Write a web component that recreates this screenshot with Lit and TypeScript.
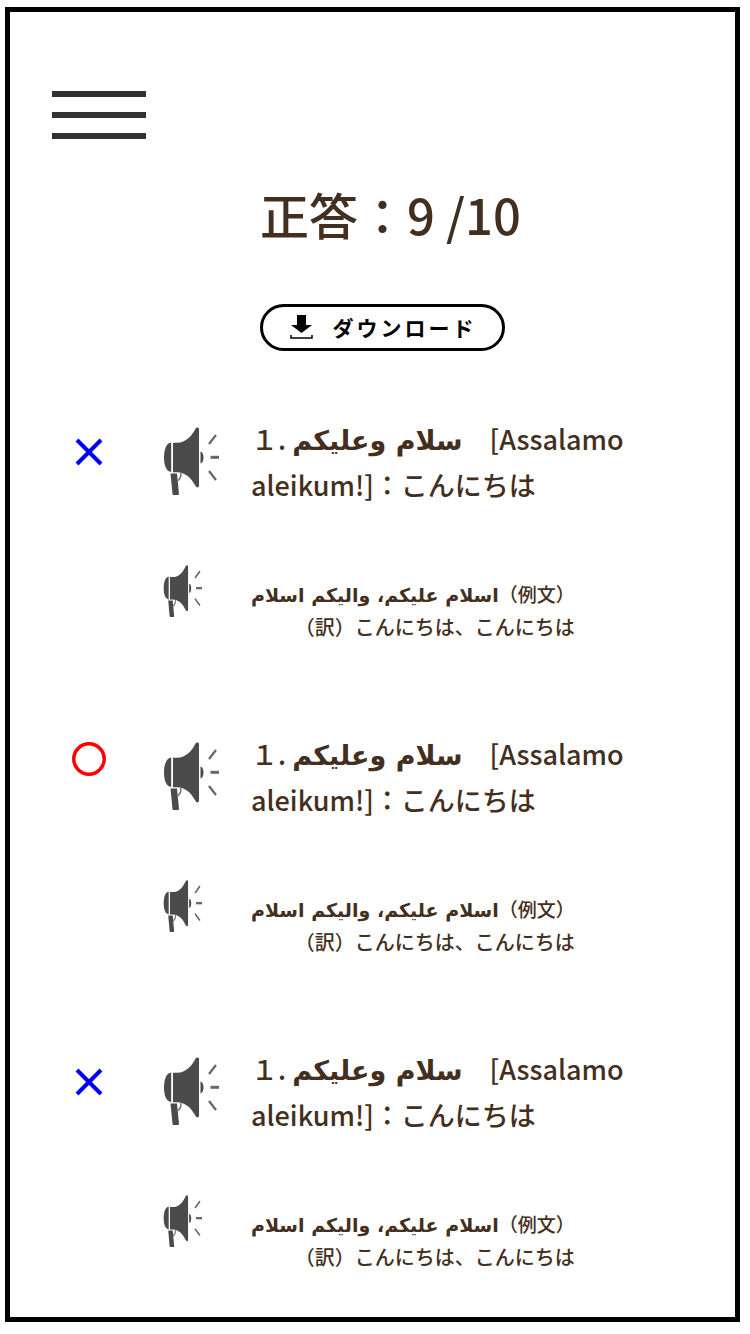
import { LitElement, html, css, svg } from "lit";
import { customElement, property, state } from "lit/decorators.js";

interface Phrase {
  correct: boolean;
  arabic: string;
  reading: string;
  meaning: string;
  example: string;
  translation: string;
}

const phrase = (correct: boolean): Phrase => ({
  correct,
  arabic: "سلام وعليكم",
  reading: "[Assalamo aleikum!]",
  meaning: "こんにちは",
  example: "اسلام عليكم، واليكم اسلام",
  translation: "こんにちは、こんにちは",
});

@customElement("speak-button")
class SpeakButton extends LitElement {
  @property() label = "";

  static styles = css`
    :host {
      display: block;
    }
    .button {
      display: block;
      width: 100%;
      height: 100%;
      padding: 0;
      border: 0;
      background: none;
      cursor: pointer;
    }
    .icon {
      display: block;
      width: 100%;
      height: 100%;
    }
  `;

  render() {
    return html`<button class="button" type="button" aria-label=${this.label}>
      <svg class="icon" viewBox="0 0 56 68" preserveAspectRatio="none" fill="#4b4b4b" aria-hidden="true">
        <path d="M8.200 15.500C3.500 16 1 22 1 30.500S3.500 44.500 8.200 45Z" />
        <path d="M10 15.800H14C23 15.500 29 9 32.500 1.500C33.500 0 36 0 36 2V58.500C36 61 33.500 61 32.500 59C28 50 22 45.500 14 45.200H10Z" />
        <path d="M37.500 24.500C41.500 25 41.500 36 37.500 36.500Z" />
        <path d="M7.500 46.500H14L16 67Q16 68 15 68H10.500Q9.500 68 9.500 67Z" />
        <path d="M17.800 46Q18.500 51 14.500 54" fill="none" stroke="#777" stroke-width="1.500" />
        <path d="M46 17L53 8M46 44L53 53" fill="none" stroke="#666" stroke-width="2.200" />
        <path d="M47.500 30.300H56" fill="none" stroke="#666" stroke-width="3" />
      </svg>
    </button>`;
  }
}

@customElement("phrase-result")
class PhraseResult extends LitElement {
  @property({ attribute: false }) phrase!: Phrase;

  static styles = css`
    :host {
      display: grid;
      grid-template-columns: 34px 56px minmax(0, 376px);
      column-gap: 57px;
      row-gap: 57px;
      align-items: start;
    }
    .mark {
      display: block;
      width: 34px;
      height: 54px;
    }
    .large {
      width: 56px;
      height: 68px;
      margin-top: 11px;
    }
    .small {
      grid-column: 2;
      width: 39px;
      height: 52px;
    }
    .word,
    .example {
      margin: 0 0 0 -25px;
    }
    .word {
      font-size: 27px;
      line-height: 46px;
    }
    .example {
      justify-self: start;
      margin-top: 12px;
      text-align: right;
    }
    .line {
      display: block;
      font-size: 19px;
      line-height: 33px;
    }
    .translation {
      font-size: 20px;
    }
    .arabic {
      font-family: "DejaVu Sans", sans-serif;
      font-weight: bold;
      line-height: 1;
    }
  `;

  render() {
    const p = this.phrase;
    return html`
      <svg class="mark" viewBox="0 0 34 54" fill="none" stroke-width="4" role="img" aria-label=${p.correct ? "正解" : "不正解"}>
        ${p.correct
          ? svg`<circle cx="17" cy="28" r="15.200" stroke="#f00" stroke-width="3.500" />`
          : svg`<path d="M5 24L29 48M29 24L5 48" stroke="#00f" />`}
      </svg>
      <speak-button class="large" label="単語を再生"></speak-button>
      <p class="word">１. <bdi class="arabic" lang="ar">${p.arabic}</bdi>${`　${p.reading}：${p.meaning}`}</p>
      <speak-button class="small" label="例文を再生"></speak-button>
      <p class="example">
        <span class="line"><bdi class="arabic" lang="ar">${p.example}</bdi>（例文）</span>
        <span class="line translation">${`（訳）${p.translation}`}</span>
      </p>
    `;
  }
}

@customElement("app-root")
class AppRoot extends LitElement {
  @state() private phrases = [phrase(false), phrase(true), phrase(false)];

  static styles = css`
    :host {
      display: block;
      box-sizing: border-box;
      padding: 7px 10px 12px 5px;
      background: #fff;
      color: #432f20;
      font-family: "Noto Sans CJK JP", sans-serif;
      font-weight: 500;
    }
    .frame {
      border: 5px solid #000;
      padding: 79px 42px 44px;
    }
    .menu {
      display: flex;
      flex-direction: column;
      gap: 15px;
      width: 94px;
      padding: 0;
      border: 0;
      background: none;
      cursor: pointer;
    }
    .bar {
      height: 6px;
      background: #333;
    }
    .score {
      margin: 40px 0 0 208px;
      font-size: 49px;
      font-weight: 500;
      line-height: 70px;
    }
    .download {
      display: flex;
      align-items: center;
      justify-content: center;
      gap: 20px;
      box-sizing: border-box;
      width: 245px;
      height: 47px;
      margin: 55px 0 65px 208px;
      padding: 0 0 2px;
      border: 3px solid #000;
      border-radius: 24px;
      background: #fff;
      color: #000;
      font: bold 21px/30px "Noto Sans CJK JP", sans-serif;
      letter-spacing: 3px;
      cursor: pointer;
    }
    .arrow {
      width: 24px;
      height: 24px;
    }
    .results {
      display: flex;
      flex-direction: column;
      gap: 88px;
      margin-left: 20px;
    }
  `;

  render() {
    return html`<main class="frame">
      <button class="menu" type="button" aria-label="メニュー">
        <span class="bar"></span><span class="bar"></span><span class="bar"></span>
      </button>
      <h1 class="score">正答：9 /10</h1>
      <button class="download" type="button">
        <svg class="arrow" viewBox="0 0 24 24" aria-hidden="true">
          <path d="M8 0H17V10H23L12.500 18L2 10H8Z" />
          <path d="M2 20V23H23V20" fill="none" stroke="#000" stroke-width="1.500" />
        </svg>
        <span>ダウンロード</span>
      </button>
      <section class="results" aria-label="結果">
        ${this.phrases.map((p) => html`<phrase-result .phrase=${p}></phrase-result>`)}
      </section>
    </main>`;
  }
}
